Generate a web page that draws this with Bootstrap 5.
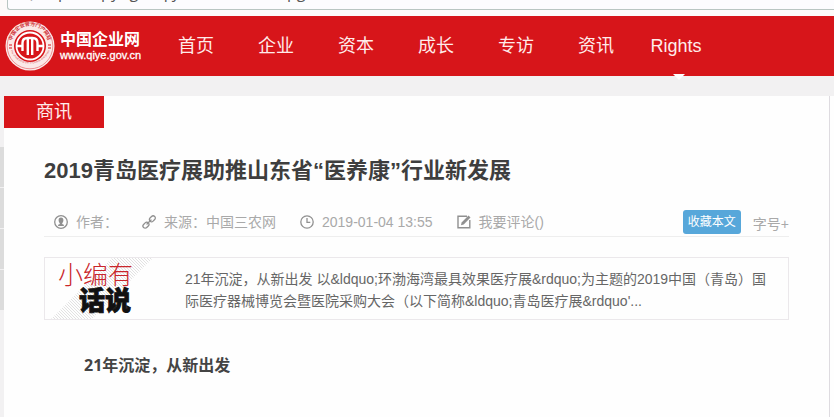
<!DOCTYPE html>
<html lang="zh-CN">
<head>
<meta charset="utf-8">
<meta name="viewport" content="width=device-width, initial-scale=1">
<title>2019青岛医疗展助推山东省“医养康”行业新发展</title>
<link href="https://cdn.jsdelivr.net/npm/bootstrap@5.3.0/dist/css/bootstrap.min.css" rel="stylesheet">
<style>
  body { font-family: "Liberation Sans", "Noto Sans CJK SC", sans-serif; font-size: 14px; background: #f2f1f2; color: #666; }
  .address-strip { height: 16px; background: #fdfaf9; padding: 0 0 6px 7px; }
  .address-box { height: 36px; border: 1px solid #b9c6c2; border-right: 0; border-radius: 3px 0 0 3px; background: #fcfcfe; color: #555; font-family: "Open Sans", sans-serif; font-size: 16px; line-height: 20px; padding: 0 20px 1px; }
  .site-header { height: 60px; background: #d7151a; }
  .brand { width: 156px; padding-left: 5px; gap: 5px; color: #fff; }
  .brand-name { font-size: 16px; line-height: 18px; font-weight: 700; white-space: nowrap; }
  .brand-url { font-size: 11px; line-height: 12px; -webkit-text-stroke: .3px #fff; }
  .site-nav .nav-link { width: 80px; padding: 0; line-height: 60px; font-size: 18px; text-align: center; color: #ffecea; }
  .site-nav .current::after { content: ""; position: absolute; left: 50%; bottom: -4px; margin-left: -3px; border: 6px solid transparent; border-top-color: #fff; border-bottom: 0; }
  .page-area { min-height: calc(100vh - 76px); padding-top: 20px; }
  .side-rail { width: 4px; padding-top: 51px; gap: 1px; }
  .side-rail span { height: 40px; background: #dcdcdc; }
  .article-panel { background: #fefefe; border-right: 1px solid #dedbe0; }
  .right-gutter { width: 4px; background: #fefefe; }
  .section-tag { width: 100px; line-height: 32px; font-size: 18px; background: #d7151a; color: #ffecea; }
  .article-body { padding: 26px 40px 32px; }
  .article-title { font-size: 22px; line-height: 34px; font-weight: 700; color: #3e3e3e; margin-bottom: 20px; }
  .meta-row { height: 29px; border-bottom: 1px solid #eee; padding-left: 10px; color: #a9a9a9; line-height: 28px; }
  .meta-row a { color: inherit; }
  .meta-item { gap: 8px; }
  .meta-item svg { flex: none; color: #909090; }
  .save-btn { height: 24px; padding: 0 5px; border: 0; border-radius: 3px; font-size: 12px; line-height: 24px; background: #57a7da; color: #fff; }
  .size-btn { border: 0; padding: 0; background: none; color: #a9a9a9; margin-top: 3px; }
  .summary-box { min-height: 63px; margin-top: 20px; border: 1px solid #ebe8eb; padding-right: 18px; }
  .summary-art { width: 140px; overflow: visible; }
  .summary-text { line-height: 22px; padding-top: 10px; }
  .lead-line { margin: 35px 0 0; padding-left: 40px; font-family: "Noto Sans", "Noto Sans CJK SC", sans-serif; font-size: 16px; line-height: 20px; font-weight: 700; color: #444; }
</style>
<script src="https://cdn.jsdelivr.net/npm/bootstrap@5.3.0/dist/js/bootstrap.bundle.min.js"></script>
</head>
<body>
<div class="address-strip d-flex align-items-end overflow-hidden">
  <input class="address-box flex-grow-1" type="text" aria-label="地址" value="( http://copyright.qiye,com/html/zxpg/" readonly>
</div>

<header class="site-header d-flex align-items-stretch">
  <a class="brand d-flex align-items-center text-decoration-none flex-shrink-0" href="#">
    <svg class="flex-shrink-0 overflow-visible" width="50" height="52" viewBox="0 0 50 52" fill="none" aria-hidden="true">
      <defs>
        <path id="arcTop" d="M8.500 31A18 18 0 1 1 41.500 31"/>
        <path id="arcBottom" d="M5 29A21 21 0 0 0 45 29"/>
      </defs>
      <circle cx="25" cy="26" r="24.500" fill="#fbe9e8"/>
      <circle cx="25" cy="26" r="22.800" stroke="#e0575a" stroke-width=".6"/>
      <text font-size="5" font-weight="700" fill="#cf3338"><textPath href="#arcTop" startOffset="50%" text-anchor="middle">中国企业官方门户网站</textPath></text>
      <text font-size="2.500" fill="#d2474b"><textPath href="#arcBottom" startOffset="50%" text-anchor="middle">The official portal site of Chinese enterprises</textPath></text>
      <circle cx="25" cy="26" r="16" fill="#d7151a"/>
      <circle cx="25" cy="26" r="13.500" stroke="#fff" stroke-width="1.800"/>
      <path d="M11.500 26h6v-3q0-5 5-5h5q5 0 5 5v3h6M17.500 26v5M32.500 26v5M22.800 19v16M27.200 19v16" stroke="#fff" stroke-width="2.400"/>
      <path d="M4 25h3M4 28h3M43 25h3M43 28h3" stroke="#d7151a" stroke-width="1.200"/>
    </svg>
    <span class="d-flex flex-column"><span class="brand-name">中国企业网</span><span class="brand-url">www.qiye.gov.cn</span></span>
  </a>
  <nav class="site-nav nav flex-nowrap" aria-label="主导航">
    <a class="nav-link" href="#">首页</a>
    <a class="nav-link" href="#">企业</a>
    <a class="nav-link" href="#">资本</a>
    <a class="nav-link" href="#">成长</a>
    <a class="nav-link" href="#">专访</a>
    <a class="nav-link" href="#">资讯</a>
    <a class="nav-link current position-relative" href="#">Rights</a>
  </nav>
</header>

<div class="page-area d-flex">
  <div class="side-rail d-flex flex-column flex-shrink-0" aria-hidden="true"><span></span><span></span><span></span><span></span></div>
  <main class="article-panel flex-grow-1">
    <div class="section-tag text-center">商讯</div>
    <article class="article-body">
      <h1 class="article-title">2019青岛医疗展助推山东省“医养康”行业新发展</h1>
      <div class="meta-row d-flex justify-content-between">
        <div class="d-flex">
          <span class="meta-item d-flex align-items-center me-4">
            <svg width="14" height="14" viewBox="0 0 14 14" aria-hidden="true"><circle cx="7" cy="7" r="6.300" fill="none" stroke="currentColor" stroke-width="1.300"/><path d="M7 2.600c1.700 0 2.400 1.200 2.400 2.600S8.700 7.700 8.200 8.200v.9l2 .8-.6 1.200H4.400l-.6-1.200 2-.8v-.9C5.300 7.700 4.600 6.600 4.600 5.200S5.300 2.600 7 2.600z" fill="currentColor"/></svg>作者：
          </span>
          <span class="meta-item d-flex align-items-center me-4">
            <svg width="14" height="14" viewBox="0 0 14 14" fill="none" stroke="currentColor" stroke-width="1.300" stroke-linecap="round" aria-hidden="true"><rect x="7" y="1.700" width="6.600" height="4.400" rx="2.200" transform="rotate(-45 10.200 3.800)"/><rect x=".6" y="8.100" width="6.600" height="4.400" rx="2.200" transform="rotate(-45 3.800 10.200)"/><path d="M5 9l4-4"/></svg>来源：中国三农网
          </span>
          <span class="meta-item d-flex align-items-center me-4">
            <svg width="14" height="14" viewBox="0 0 14 14" fill="none" stroke="currentColor" stroke-width="1.300" aria-hidden="true"><circle cx="7" cy="7" r="6.200"/><path d="M7 3v4.300h3.300"/></svg><time datetime="2019-01-04T13:55">2019-01-04 13:55</time>
          </span>
          <a class="meta-item d-flex align-items-center text-decoration-none" href="#">
            <svg width="14" height="14" viewBox="0 0 14 14" aria-hidden="true"><path d="M10 1.200H1v11.600h11.800V5" fill="none" stroke="currentColor" stroke-width="1.400"/><path d="M4 10.300l.6-2.800L11.500.6l2 2L6.700 9.600z" fill="currentColor"/></svg>我要评论()
          </a>
        </div>
        <div class="d-flex align-items-center gap-2">
          <button class="save-btn me-1" type="button">收藏本文</button>
          <button class="size-btn" type="button">字号+</button>
        </div>
      </div>
      <section class="summary-box d-flex">
        <svg class="summary-art flex-shrink-0" width="140" height="61" viewBox="0 0 140 61" role="img" aria-label="小编有话说">
          <defs><pattern id="hatch" width="3" height="3" patternUnits="userSpaceOnUse"><path d="M0 0l3 3" stroke="#dadada" stroke-width=".8"/></pattern></defs>
          <path d="M6 61L67 0h41L47 61z" fill="url(#hatch)"/>
          <text x="13" y="26" font-family="Noto Sans CJK SC" font-size="25" font-weight="300" fill="#c9262b">小编有</text>
          <text x="34" y="52" font-family="Noto Sans CJK SC" font-size="26" font-weight="900" fill="#111" stroke="#111" stroke-width=".8">话说</text>
        </svg>
        <p class="summary-text mb-0">21年沉淀，从新出发 以&amp;ldquo;环渤海湾最具效果医疗展&amp;rdquo;为主题的2019中国（青岛）国际医疗器械博览会暨医院采购大会（以下简称&amp;ldquo;青岛医疗展&amp;rdquo'...</p>
      </section>
      <p class="lead-line">21年沉淀，从新出发</p>
    </article>
  </main>
  <div class="right-gutter flex-shrink-0"></div>
</div>
</body>
</html>
